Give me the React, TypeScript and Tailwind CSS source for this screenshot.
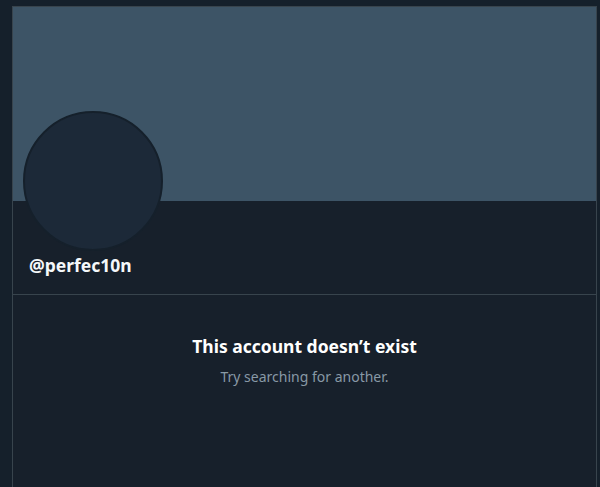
import React from "react";

export default function App() {
  return (
    <div className="w-[600px] h-[487px] bg-[#15202b] overflow-hidden flex pl-[12px] pr-[3px] pt-[6px]" style={{ fontFamily: '"Noto Sans", "Open Sans", sans-serif' }}>
      <div className="flex-1 flex flex-col border-x border-t border-[#38444d] bg-[#17202b]">
        <div className="h-[194px] bg-[#3d5466]" />
        <div className="px-[10px]">
          <div className="mt-[-90px] w-[140px] h-[140px] rounded-full bg-[#1c2938] border-[2px] border-[#15202b]" />
          <div className="mt-[3px] pl-[6px] text-[17.5px] font-bold text-[#f5f8fa] leading-[22px]">@perfec10n</div>
        </div>
        <div className="mt-[18px] border-t border-[#38444d] flex flex-col items-center pt-[39px]">
          <div className="text-[17.5px] font-bold text-white leading-[24px]">This account doesn’t exist</div>
          <div className="mt-[9px] text-[14px] text-[#8899a6] leading-[20px]">Try searching for another.</div>
        </div>
      </div>
    </div>
  );
}
